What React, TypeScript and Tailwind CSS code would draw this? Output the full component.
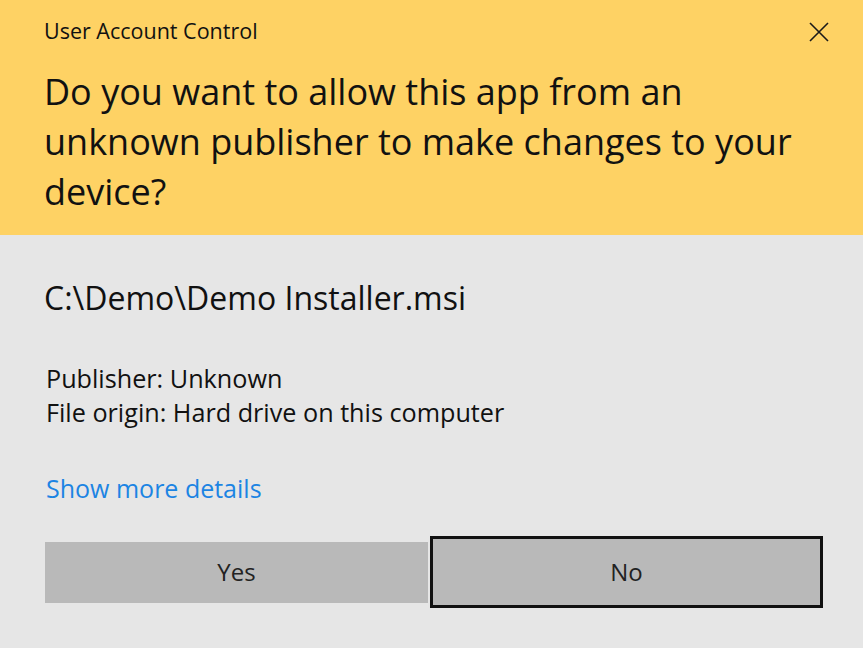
export default function App() {
  return (
    <div
      className="w-[863px] h-[651px] bg-white text-[#111]"
      style={{ fontFamily: '"Open Sans", "Noto Sans", sans-serif' }}
    >
      {/* Header */}
      <div className="bg-[#fed264] px-[44px] pt-[16px] pb-[18px]">
        <div className="flex items-center justify-between h-[30px]">
          <span className="text-[21.5px] leading-[30px]">User Account Control</span>
          <svg
            className="w-[20px] h-[20px] -mr-[10px] mt-[1px]"
            viewBox="0 0 20 20"
            fill="none"
            stroke="#1a1a1a"
            strokeWidth="1.6"
          >
            <path d="M1 1L19 19M19 1L1 19" />
          </svg>
        </div>
        <h1 className="mt-[21px] text-[36px] leading-[50px] font-normal">
          Do you want to allow this app from an
          <br />
          unknown publisher to make changes to your
          <br />
          device?
        </h1>
      </div>

      {/* Body */}
      <div className="bg-[#e6e6e6] h-[413px] pl-[44px] pr-[40px] flex flex-col">
        <div className="mt-[43px] text-[32px] leading-[40px]">C:\Demo\Demo Installer.msi</div>
        <div className="mt-[43px] text-[25.2px] leading-[34px] pl-[2px]">
          <div>Publisher: Unknown</div>
          <div>File origin: Hard drive on this computer</div>
        </div>
        <div className="mt-[42px] text-[25px] leading-[34px] pl-[2px] text-[#1c84e3]">
          Show more details
        </div>
        <div className="mt-[31px] flex items-center gap-[2px] pl-[1px]">
          <button className="w-[383px] h-[61px] bg-[#b9b9b9] text-[24px] text-[#222]">Yes</button>
          <button className="w-[393px] h-[72px] bg-[#b9b9b9] border-[3px] border-[#111] text-[24px] text-[#222]">
            No
          </button>
        </div>
      </div>
    </div>
  );
}
